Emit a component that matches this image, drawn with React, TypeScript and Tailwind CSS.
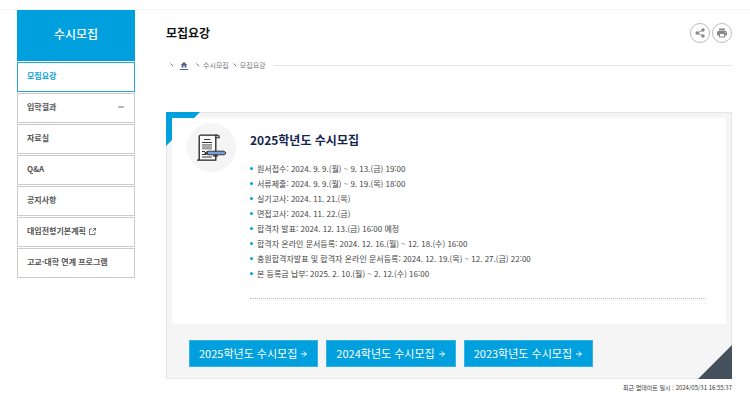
import { ArrowRight, Minus } from "lucide-react";
import { MdHome, MdPrint } from "react-icons/md";

const menu = [
  { label: "모집요강", active: true },
  { label: "입학결과", expandable: true },
  { label: "자료실" },
  { label: "Q&A" },
  { label: "공지사항" },
  { label: "대입전형기본계획", external: true },
  { label: "고교·대학 연계 프로그램" },
];

const schedule = [
  "원서접수: 2024. 9. 9.(월) ~ 9. 13.(금) 19:00",
  "서류제출: 2024. 9. 9.(월) ~ 9. 19.(목) 18:00",
  "실기고사: 2024. 11. 21.(목)",
  "면접고사: 2024. 11. 22.(금)",
  "합격자 발표: 2024. 12. 13.(금) 16:00 예정",
  "합격자 온라인 문서등록: 2024. 12. 16.(월) ~ 12. 18.(수) 16:00",
  "충원합격자발표 및 합격자 온라인 문서등록: 2024. 12. 19.(목) ~ 12. 27.(금) 22:00",
  "본 등록금 납부: 2025. 2. 10.(월) ~ 2. 12.(수) 16:00",
];

const years = ["2025", "2024", "2023"];

function ExternalIcon() {
  return (
    <svg viewBox="0 0 7 7" className="ml-[3px] size-[7px]" fill="none" stroke="currentColor" strokeWidth="0.8">
      <path d="M3 1H0.5V6.5H6V4M4.2 0.5H6.5V2.8M6.5 0.5L3.5 3.5" />
    </svg>
  );
}

function Sidebar() {
  return (
    <nav aria-label="수시모집" className="w-[118px] shrink-0">
      <h2 className="flex h-[51px] items-center justify-center bg-[#009fde] pb-1 text-[12px] font-medium text-white">
        수시모집
      </h2>
      <ul className="mt-px flex flex-col gap-px">
        {menu.map((item) => (
          <li key={item.label}>
            <a
              href="#"
              className={`flex h-[30px] items-center border px-[9px] pb-[2px] text-[8px] font-bold ${
                item.active ? "border-[#1fa9e0] text-[#009fde]" : "border-[#cbcbcb] text-[#555]"
              }`}
            >
              {item.label}
              {item.external && <ExternalIcon />}
              {item.expandable && <Minus strokeWidth={4} className="ml-auto size-2 text-[#999]" />}
            </a>
          </li>
        ))}
      </ul>
    </nav>
  );
}

function Chevron() {
  return (
    <svg viewBox="0 0 4 4" className="size-1 text-[#777]" fill="none" stroke="currentColor">
      <path d="M0.5 0.5 L3.2 3.2" />
    </svg>
  );
}

function ShareIcon() {
  return (
    <svg viewBox="0 0 10 10" className="size-[10px]" fill="currentColor">
      <path d="M8 2L2.2 5L8 8" fill="none" stroke="currentColor" strokeWidth="1" />
      <circle cx="8" cy="2" r="1.7" />
      <circle cx="2.2" cy="5" r="1.8" />
      <circle cx="8" cy="8" r="1.7" />
    </svg>
  );
}

function Breadcrumb() {
  return (
    <div className="mt-[14px] flex h-4 items-center text-[7px] text-[#777]">
      <ol className="flex items-center gap-1 pl-1">
        <li className="flex items-center gap-[6px]">
          <Chevron />
          <a href="#" aria-label="홈" className="border-b border-[#53607f] text-[#53607f]">
            <MdHome className="size-2" />
          </a>
        </li>
        <li className="ml-1 flex items-center gap-[3px]">
          <Chevron />
          수시모집
        </li>
        <li className="flex items-center gap-[3px]">
          <Chevron />
          모집요강
        </li>
      </ol>
      <div className="ml-2 h-px flex-1 bg-[#e3e3e3]" />
    </div>
  );
}

function DocumentIcon() {
  return (
    <svg viewBox="0 0 30 28" className="h-7 w-[30px]" fill="none">
      <path d="M2 26V3Q2 1.2 4 1.2H19V26Z" fill="#fff" />
      <path d="M0 26.2H18.8V3M2.2 26V3Q2.2 1.2 4 1.2H20" stroke="#222" strokeWidth="1.3" />
      <path d="M18.8 1.2H21Q22.6 1.6 22.2 3.8H18.8Z" fill="#e9d5bd" stroke="#222" strokeWidth="1.1" />
      <path d="M7 5.5H13.5M5 8.5H15M5 17.5H8M5 20.5H9M5 23H15" stroke="#333" strokeWidth="1.1" />
      <path d="M5 10.5H15V15H5Z" fill="#aaa" />
      <path d="M5 10.5H15M5 15H15" stroke="#666" strokeWidth="0.6" />
      <path d="M7.5 19L11 17.2H27L29 19L27.5 20.8H11Z" fill="#7b9fd6" stroke="#222" strokeWidth="0.9" />
      <path d="M7.5 19L11 17.2V20.8Z" fill="#444" />
      <path d="M16 22H21" stroke="#222" strokeWidth="1.2" />
    </svg>
  );
}

function SchedulePanel() {
  return (
    <section className="relative mt-[39px] border border-[#e6e6e6] bg-[#f5f5f5] px-[5px] pt-[5px] pb-[11px]">
      <svg viewBox="0 0 34 34" className="absolute -top-px -left-px size-[34px]">
        <path d="M0 0H34L28 6H6V28L0 34Z" fill="#009fde" />
      </svg>
      <div className="relative flex gap-[14px] bg-white pt-[5px] pr-5 pb-[25px] pl-[15px]">
        <div className="flex size-[49px] shrink-0 items-center justify-center rounded-full bg-[#f5f5f5]">
          <DocumentIcon />
        </div>
        <div className="min-w-0 flex-1">
          <h2 className="pt-[7px] text-[12px] leading-5 font-bold text-[#14264e]">2025학년도 수시모집</h2>
          <ul className="mt-[11px] border-b border-dotted border-[#bbb] pb-[17px] text-[8px] leading-[15px] text-[#444]">
            {schedule.map((line) => (
              <li key={line} className="flex items-center gap-1">
                <span className="size-[3px] rounded-full bg-[#009fde]" />
                {line}
              </li>
            ))}
          </ul>
        </div>
      </div>
      <div className="mt-4 flex gap-2 pl-[17px]">
        {years.map((year) => (
          <a
            key={year}
            href="#"
            className="flex h-[27px] items-center gap-[3px] border border-[#35b3e5] bg-[#009fde] px-[9px] text-[11px] text-white"
          >
            {year}학년도 수시모집
            <ArrowRight strokeWidth={3} className="size-2" />
          </a>
        ))}
      </div>
      <svg viewBox="0 0 34 34" className="absolute -right-px -bottom-px size-[34px]">
        <path d="M34 0V34H0Z" fill="#44515c" />
      </svg>
    </section>
  );
}

export default function App() {
  return (
    <div
      lang="ko"
      className="min-h-screen bg-white pt-[9px] font-['Noto_Sans_CJK_KR','Noto_Sans',sans-serif] text-[#333]"
    >
      <div className="flex items-start gap-[31px] border-t border-[#f2f2f2] pr-[18px] pl-[17px]">
        <Sidebar />
        <main className="min-w-0 flex-1">
          <div className="flex items-center justify-between pt-[13px]">
            <h1 className="text-[12px] leading-5 font-bold text-[#111]">모집요강</h1>
            <div className="flex gap-[2px]">
              <button
                type="button"
                aria-label="공유"
                className="flex size-5 items-center justify-center rounded-full border border-[#bbb] text-[#888]"
              >
                <ShareIcon />
              </button>
              <button
                type="button"
                aria-label="인쇄"
                className="flex size-5 items-center justify-center rounded-full border border-[#bbb] text-[#888]"
              >
                <MdPrint className="size-3" />
              </button>
            </div>
          </div>
          <Breadcrumb />
          <SchedulePanel />
          <p className="mt-[3px] text-right text-[6px] leading-3 text-[#333]">
            최근 업데이트 일시 : 2024/05/31 16:55:37
          </p>
        </main>
      </div>
    </div>
  );
}
